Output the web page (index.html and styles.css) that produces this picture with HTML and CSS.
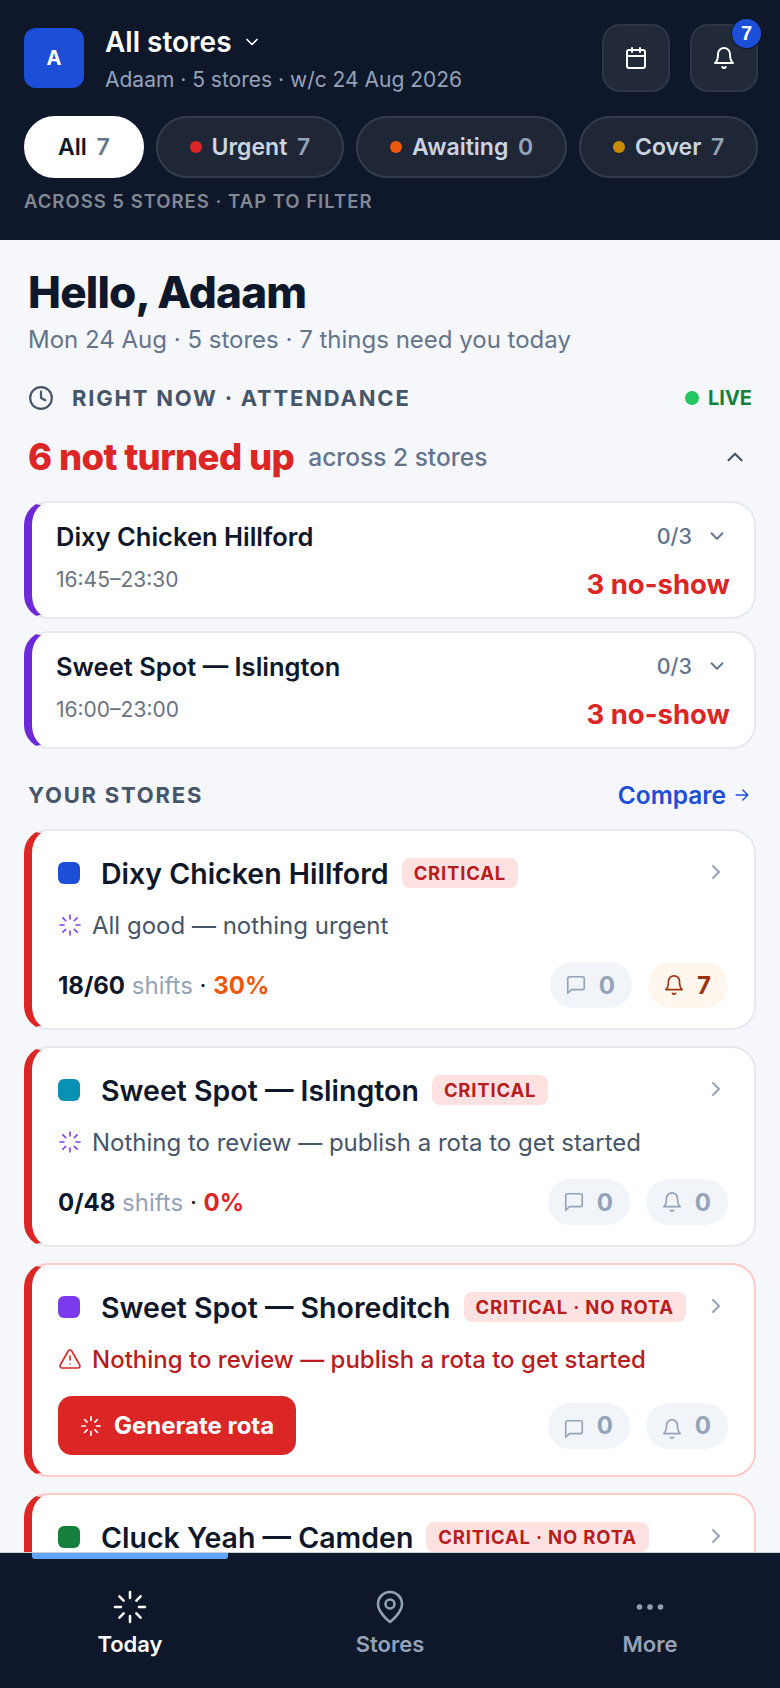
FILE: index.html
```html
<!DOCTYPE html>
<html lang="en">
<head>
    <meta charset="UTF-8">
    <meta name="viewport" content="width=device-width, initial-scale=1.0">
    <title>Today</title>
    <link rel="stylesheet" href="styles.css">
</head>
<body>
    <svg class="sprite">
        <symbol id="i-loader" viewBox="0 0 24 24"><path d="M12 2v4M12 18v4M4.93 4.93l2.83 2.83M16.24 16.24l2.83 2.83M2 12h4M18 12h4M4.93 19.07l2.83-2.83M16.24 7.76l2.83-2.83"/></symbol>
        <symbol id="i-bell" viewBox="0 0 24 24"><path d="M6 8a6 6 0 0 1 12 0c0 7 3 9 3 9H3s3-2 3-9"/><path d="M10.3 21a1.94 1.94 0 0 0 3.4 0"/></symbol>
        <symbol id="i-chat" viewBox="0 0 24 24"><path d="M21 15a2 2 0 0 1-2 2H7l-4 4V5a2 2 0 0 1 2-2h14a2 2 0 0 1 2 2z"/></symbol>
        <symbol id="i-down" viewBox="0 0 24 24"><path d="M6 9l6 6 6-6"/></symbol>
        <symbol id="i-right" viewBox="0 0 24 24"><path d="M9 18l6-6-6-6"/></symbol>
    </svg>

    <header class="top">
        <div class="top-row">
            <div class="avatar">A</div>
            <div class="top-text">
                <div class="top-title">All stores <svg class="ic top-chev"><use href="#i-down"/></svg></div>
                <div class="top-sub">Adaam · 5 stores · w/c 24 Aug 2026</div>
            </div>
            <button class="icon-btn">
                <svg class="ic btn-ic" viewBox="0 0 24 24"><rect x="3" y="4" width="18" height="18" rx="2"/><path d="M16 2v4M8 2v4M3 10h18"/></svg>
            </button>
            <button class="icon-btn">
                <svg class="ic btn-ic"><use href="#i-bell"/></svg>
                <span class="btn-badge">7</span>
            </button>
        </div>
        <div class="chips">
            <div class="chip chip-on">All <span class="chip-n">7</span></div>
            <div class="chip"><span class="dot dot-red"></span>Urgent <span class="chip-n">7</span></div>
            <div class="chip"><span class="dot dot-orange"></span>Awaiting <span class="chip-n">0</span></div>
            <div class="chip"><span class="dot dot-amber"></span>Cover <span class="chip-n">7</span></div>
        </div>
        <div class="top-note">ACROSS 5 STORES · TAP TO FILTER</div>
    </header>

    <main class="main">
        <h1 class="hello">Hello, Adaam</h1>
        <div class="hello-sub">Mon 24 Aug · 5 stores · 7 things need you today</div>

        <div class="now-row">
            <svg class="ic now-ic" viewBox="0 0 24 24"><circle cx="12" cy="12" r="10"/><path d="M12 6v6l4 2"/></svg>
            <span class="now-label">RIGHT NOW · ATTENDANCE</span>
            <span class="live"><span class="live-dot"></span>LIVE</span>
        </div>

        <div class="miss-row">
            <span class="miss-big">6 not turned up</span>
            <span class="miss-small">across 2 stores</span>
            <svg class="ic miss-chev" viewBox="0 0 24 24"><path d="M18 15l-6-6-6 6"/></svg>
        </div>

        <div class="att-card">
            <div class="att-line">
                <span class="att-name">Dixy Chicken Hillford</span>
                <span class="att-count">0/3</span>
                <svg class="ic att-chev"><use href="#i-down"/></svg>
            </div>
            <div class="att-line att-line2">
                <span class="att-time">16:45–23:30</span>
                <span class="att-miss">3 no-show</span>
            </div>
        </div>
        <div class="att-card">
            <div class="att-line">
                <span class="att-name">Sweet Spot — Islington</span>
                <span class="att-count">0/3</span>
                <svg class="ic att-chev"><use href="#i-down"/></svg>
            </div>
            <div class="att-line att-line2">
                <span class="att-time">16:00–23:00</span>
                <span class="att-miss">3 no-show</span>
            </div>
        </div>

        <div class="stores-head">
            <span class="stores-label">YOUR STORES</span>
            <span class="compare">Compare
                <svg class="ic compare-ic" viewBox="0 0 24 24"><path d="M5 12h14M13 6l6 6-6 6"/></svg>
            </span>
        </div>

        <div class="store">
            <div class="store-top">
                <span class="sq sq-blue"></span>
                <span class="store-name">Dixy Chicken Hillford</span>
                <span class="tag">CRITICAL</span>
                <svg class="ic store-chev"><use href="#i-right"/></svg>
            </div>
            <div class="store-msg">
                <svg class="ic msg-ic"><use href="#i-loader"/></svg>
                All good — nothing urgent
            </div>
            <div class="store-foot">
                <div class="shifts"><b>18/60</b> <span class="shifts-w">shifts</span> <span class="sep">·</span> <b class="pct-orange">30%</b></div>
                <span class="pill"><svg class="ic pill-ic"><use href="#i-chat"/></svg>0</span>
                <span class="pill pill-warm"><svg class="ic pill-ic"><use href="#i-bell"/></svg>7</span>
            </div>
        </div>

        <div class="store">
            <div class="store-top">
                <span class="sq sq-teal"></span>
                <span class="store-name">Sweet Spot — Islington</span>
                <span class="tag">CRITICAL</span>
                <svg class="ic store-chev"><use href="#i-right"/></svg>
            </div>
            <div class="store-msg">
                <svg class="ic msg-ic"><use href="#i-loader"/></svg>
                Nothing to review — publish a rota to get started
            </div>
            <div class="store-foot">
                <div class="shifts"><b>0/48</b> <span class="shifts-w">shifts</span> <span class="sep">·</span> <b class="pct-red">0%</b></div>
                <span class="pill"><svg class="ic pill-ic"><use href="#i-chat"/></svg>0</span>
                <span class="pill"><svg class="ic pill-ic"><use href="#i-bell"/></svg>0</span>
            </div>
        </div>

        <div class="store store-alert">
            <div class="store-top">
                <span class="sq sq-purple"></span>
                <span class="store-name">Sweet Spot — Shoreditch</span>
                <span class="tag">CRITICAL · NO ROTA</span>
                <svg class="ic store-chev"><use href="#i-right"/></svg>
            </div>
            <div class="store-msg msg-alert">
                <svg class="ic msg-ic" viewBox="0 0 24 24"><path d="M21.73 18l-8-14a2 2 0 0 0-3.48 0l-8 14A2 2 0 0 0 4 21h16a2 2 0 0 0 1.73-3"/><path d="M12 9v4M12 17h.01"/></svg>
                Nothing to review — publish a rota to get started
            </div>
            <div class="store-foot">
                <button class="gen-btn"><svg class="ic gen-ic"><use href="#i-loader"/></svg>Generate rota</button>
                <span class="pill"><svg class="ic pill-ic pill-low"><use href="#i-chat"/></svg>0</span>
                <span class="pill"><svg class="ic pill-ic pill-low"><use href="#i-bell"/></svg>0</span>
            </div>
        </div>

        <div class="store store-alert">
            <div class="store-top">
                <span class="sq sq-green"></span>
                <span class="store-name">Cluck Yeah — Camden</span>
                <span class="tag">CRITICAL · NO ROTA</span>
                <svg class="ic store-chev"><use href="#i-right"/></svg>
            </div>
        </div>
    </main>

    <nav class="nav">
        <div class="nav-bar"></div>
        <div class="nav-item nav-on">
            <svg class="ic nav-ic"><use href="#i-loader"/></svg>
            Today
        </div>
        <div class="nav-item">
            <svg class="ic nav-ic" viewBox="0 0 24 24"><path d="M20 10c0 6-8 12-8 12s-8-6-8-12a8 8 0 0 1 16 0"/><circle cx="12" cy="10" r="3"/></svg>
            Stores
        </div>
        <div class="nav-item">
            <svg class="ic nav-ic" viewBox="0 0 24 24"><circle cx="5" cy="12" r="1"/><circle cx="12" cy="12" r="1"/><circle cx="19" cy="12" r="1"/></svg>
            More
        </div>
    </nav>
</body>
</html>
```

FILE: styles.css
```css
* {
  box-sizing: border-box;
}
html, body {
  margin: 0;
  height: 100%;
}
body {
  display: flex;
  flex-direction: column;
  height: 1688px;
  overflow: hidden;
  background: #f5f7fb;
  font-family: Inter, "Liberation Sans", sans-serif;
  color: #0f172a;
}
.sprite {
  display: none;
}
.ic {
  fill: none;
  stroke: currentColor;
  stroke-width: 2;
  stroke-linecap: round;
  stroke-linejoin: round;
  flex: none;
}

/* header */
.top {
  height: 240px;
  flex: none;
  background: #0f182b;
  padding: 24px 22px 0 24px;
}
.top-row {
  display: flex;
  align-items: flex-start;
  gap: 20px;
}
.avatar {
  width: 60px;
  height: 60px;
  margin-top: 4px;
  margin-right: 1px;
  border-radius: 12px;
  background: #1d4ed8;
  color: #fff;
  font-weight: 700;
  font-size: 20px;
  display: flex;
  align-items: center;
  justify-content: center;
}
.top-text {
  flex: 1;
}
.top-title {
  display: flex;
  align-items: center;
  gap: 10px;
  height: 36px;
  color: #fff;
  font-size: 28px;
  font-weight: 600;
}
.top-chev {
  width: 20px;
  height: 20px;
}
.top-sub {
  margin-top: 7px;
  font-size: 21px;
  color: #94a3b8;
}
.icon-btn {
  position: relative;
  width: 68px;
  height: 68px;
  padding: 0;
  border: 2px solid #2d3646;
  border-radius: 18px;
  background: #222938;
  color: #fff;
  display: flex;
  align-items: center;
  justify-content: center;
}
.btn-ic {
  width: 24px;
  height: 24px;
}
.btn-badge {
  position: absolute;
  top: -7px;
  right: -5px;
  width: 29px;
  height: 29px;
  border-radius: 50%;
  background: #1d4ed8;
  color: #fff;
  font-size: 20px;
  font-weight: 700;
  display: flex;
  align-items: center;
  justify-content: center;
  box-shadow: 0 0 0 1px #0f182b;
}
.chips {
  display: flex;
  gap: 12px;
  margin-top: 24px;
}
.chip {
  height: 62px;
  padding: 0 30px 0 32px;
  border: 2px solid #343c4c;
  border-radius: 31px;
  background: #1f2737;
  color: #cbd5e1;
  font-size: 23px;
  font-weight: 600;
  line-height: 58px;
  display: flex;
  align-items: center;
  flex: 1 1 auto;
  white-space: pre;
}
.chip-on {
  background: #fff;
  border-color: #fff;
  color: #0f172a;
}
.chip-n {
  margin-left: 4px;
  color: #94a3b8;
}
.chip-on .chip-n {
  color: #64748b;
}
.dot {
  width: 12px;
  height: 12px;
  border-radius: 50%;
  margin-right: 10px;
}
.dot-red { background: #dc2626; }
.dot-orange { background: #ea580c; }
.dot-amber { background: #ca8a04; }
.top-note {
  margin-top: 12px;
  color: #828995;
  font-size: 18.5px;
  font-weight: 600;
  letter-spacing: 1px;
}

/* main */
.main {
  flex: 1;
  min-height: 0;
  overflow: hidden;
  padding: 0 24px;
}
.hello {
  margin: 25px 0 0 4px;
  font-size: 44px;
  line-height: 54px;
  font-weight: 800;
  letter-spacing: -0.8px;
}
.hello-sub {
  margin: 6px 0 0 4px;
  font-size: 24px;
  color: #64748b;
}
.now-row {
  display: flex;
  align-items: center;
  margin: 31px 4px 0 4px;
}
.now-ic {
  width: 26px;
  height: 26px;
  color: #475569;
}
.now-label {
  flex: 1;
  margin-left: 18px;
  font-size: 22px;
  font-weight: 700;
  letter-spacing: 1.8px;
  color: #475569;
}
.live {
  display: flex;
  align-items: center;
  gap: 9px;
  font-size: 20px;
  font-weight: 700;
  color: #15803d;
}
.live-dot {
  width: 14px;
  height: 14px;
  border-radius: 50%;
  background: #22c55e;
}
.miss-row {
  display: flex;
  align-items: center;
  margin: 24px 4px 0 4px;
  height: 44px;
}
.miss-big {
  font-size: 36.5px;
  font-weight: 800;
  letter-spacing: -0.6px;
  color: #dc2626;
}
.miss-small {
  flex: 1;
  margin-left: 14px;
  font-size: 24.5px;
  font-weight: 500;
  color: #64748b;
}
.miss-chev {
  width: 26px;
  height: 26px;
  margin-right: 4px;
  color: #475569;
}
.att-card {
  height: 118px;
  margin-top: 12px;
  padding: 17px 24px 0 24px;
  background: #fff;
  border: 2px solid #e6e9ef;
  border-left: 8px solid #6d28d9;
  border-radius: 24px;
}
.miss-row + .att-card {
  margin-top: 22px;
}
.att-line {
  display: flex;
  align-items: center;
  height: 32px;
}
.att-line2 {
  justify-content: space-between;
  align-items: flex-start;
  margin-top: 15px;
}
.att-name {
  flex: 1;
  font-size: 25.5px;
  font-weight: 600;
}
.att-count {
  font-size: 21.5px;
  font-weight: 500;
  color: #64748b;
}
.att-chev {
  width: 22px;
  height: 22px;
  margin-left: 14px;
  margin-right: 2px;
  color: #64748b;
}
.att-time {
  font-size: 21px;
  color: #6b7280;
}
.att-miss {
  font-size: 27.5px;
  line-height: 34px;
  font-weight: 700;
  color: #dc2626;
}
.stores-head {
  display: flex;
  justify-content: space-between;
  align-items: center;
  margin: 30px 4px 0 4px;
  height: 32px;
}
.stores-label {
  font-size: 22px;
  font-weight: 700;
  letter-spacing: 1.8px;
  color: #475569;
}
.compare {
  display: flex;
  align-items: center;
  gap: 6px;
  font-size: 24.5px;
  font-weight: 600;
  color: #1d4ed8;
}
.compare-ic {
  width: 20px;
  height: 20px;
  stroke-width: 1.7;
}
.store {
  margin-top: 16px;
  padding: 26px 26px 20px 26px;
  background: #fff;
  border: 2px solid #e6e9ef;
  border-left: 8px solid #dc2626;
  border-radius: 24px;
}
.stores-head + .store {
  margin-top: 18px;
}
.store-alert {
  border-color: #fecaca;
  border-left-color: #dc2626;
}
.store-top {
  display: flex;
  align-items: center;
  height: 32px;
}
.sq {
  width: 22px;
  height: 22px;
  border-radius: 6px;
  flex: none;
}
.sq-blue { background: #1d4ed8; }
.sq-teal { background: #0891b2; }
.sq-purple { background: #7c3aed; }
.sq-green { background: #15803d; }
.store-name {
  margin-left: 21px;
  font-size: 28.5px;
  font-weight: 600;
  white-space: nowrap;
}
.tag {
  margin-left: 13px;
  padding: 0 12px;
  height: 30px;
  line-height: 30px;
  border-radius: 8px;
  background: #fee2e2;
  color: #b91c1c;
  font-size: 18.5px;
  font-weight: 700;
  letter-spacing: 0.8px;
  white-space: nowrap;
}
.store-chev {
  width: 24px;
  height: 24px;
  margin-left: auto;
  margin-top: -3px;
  color: #94a3b8;
}
.store-msg {
  display: flex;
  align-items: center;
  gap: 10px;
  margin-top: 19px;
  height: 34px;
  font-size: 24px;
  color: #475569;
}
.msg-ic {
  width: 24px;
  height: 24px;
  color: #7c3aed;
  stroke-width: 1.6;
}
.msg-alert {
  font-weight: 500;
  color: #b91c1c;
}
.msg-alert .msg-ic {
  color: #dc2626;
}
.store-foot {
  display: flex;
  align-items: center;
  gap: 16px;
  margin-top: 20px;
}
.shifts {
  flex: 1;
  font-size: 24px;
}
.shifts b {
  font-weight: 700;
}
.shifts-w {
  color: #94a3b8;
}
.pct-orange { color: #ea580c; }
.pct-red { color: #dc2626; }
.pill {
  height: 46px;
  padding: 0 17px 0 15px;
  border-radius: 23px;
  background: #f1f5f9;
  color: #94a3b8;
  font-size: 24px;
  font-weight: 700;
  display: flex;
  align-items: center;
  gap: 12px;
}
.pill-warm {
  background: #fff7ed;
  color: #9a3412;
}
.pill-ic {
  width: 22px;
  height: 22px;
  stroke-width: 1.8;
}
.pill-low {
  margin-top: 6px;
}
.gen-btn {
  margin-right: auto;
  height: 59px;
  padding: 0 22px;
  border: 0;
  border-radius: 14px;
  background: #dc2626;
  color: #fff;
  font-family: inherit;
  font-size: 24px;
  font-weight: 700;
  display: flex;
  align-items: center;
  gap: 12px;
}
.gen-ic {
  width: 22px;
  height: 22px;
  stroke-width: 1.8;
}

/* bottom nav */
.nav {
  position: relative;
  flex: none;
  height: 136px;
  background: #0f182b;
  border-top: 1px solid #cbd0d8;
  display: grid;
  grid-template-columns: repeat(3, 1fr);
  padding-top: 36px;
}
.nav-bar {
  position: absolute;
  top: 0;
  left: 32px;
  width: 196px;
  height: 6px;
  border-radius: 0 0 3px 3px;
  background: #60a5fa;
}
.nav-item {
  display: flex;
  flex-direction: column;
  align-items: center;
  gap: 6px;
  font-size: 22px;
  font-weight: 600;
  color: #94a3b8;
}
.nav-on {
  color: #fff;
}
.nav-ic {
  width: 36px;
  height: 36px;
  stroke-width: 1.7;
}
```
